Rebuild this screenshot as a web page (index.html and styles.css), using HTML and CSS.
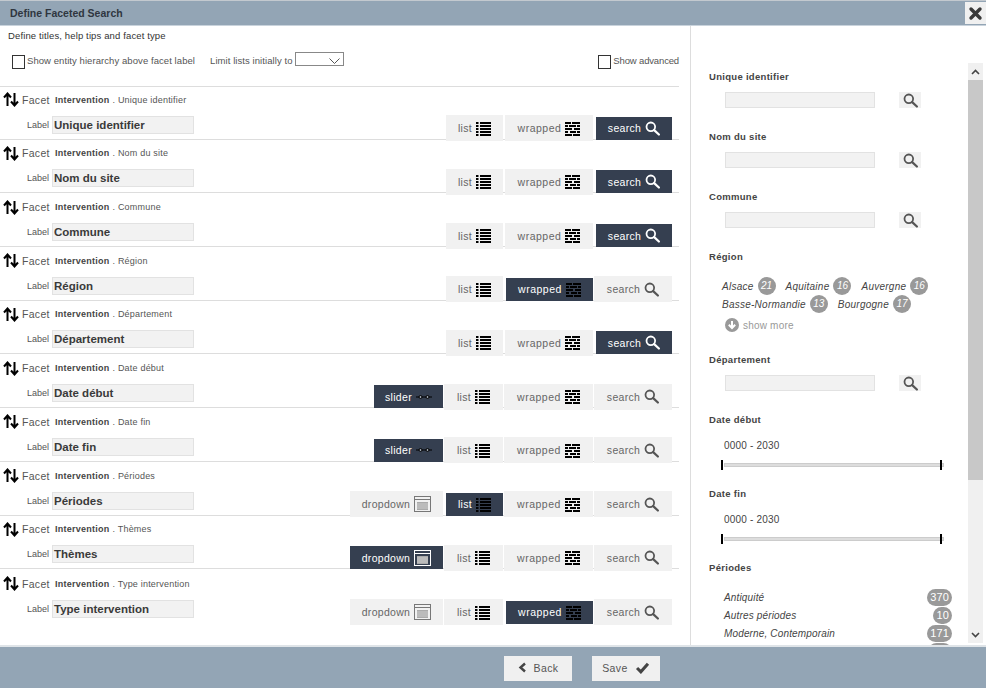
FILE: index.html
```html
<!DOCTYPE html>
<html lang="en">
<head>
<meta charset="utf-8">
<title>Define Faceted Search</title>
<link rel="stylesheet" href="styles.css">
</head>
<body>
<svg class="defs" width="0" height="0" aria-hidden="true">
  <symbol id="i-search" viewBox="0 0 16 16"><circle cx="6.2" cy="6.2" r="4.6" fill="none" stroke="currentColor" stroke-width="1.9"/><path d="M9.8 9.8 14.8 14.4" fill="none" stroke="currentColor" stroke-width="2.4" stroke-linecap="round"/></symbol>
  <symbol id="i-list" viewBox="0 0 15 15"><path d="M0 1h2.500v2H0zM0 4h2.500v2H0zM0 7h2.500v2H0zM0 10h2.500v2H0zM0 13h2.500v2H0zM4 1h11v2H4zM4 4h11v2H4zM4 7h11v2H4zM4 10h11v2H4zM4 13h11v2H4z" fill="#000"/></symbol>
  <symbol id="i-wrap" viewBox="0 0 15 15"><path d="M0 1h6v2H0zM7 1h8v2H7zM0 4h3v2H0zM4 4h7v2H4zM12 4h3v2h-3zM0 7h7v2H0zM9 7h6v2H9zM0 10h3v2H0zM5 10h6v2H5zM12 10h3v2h-3zM0 13h7v2H0zM8 13h7v2H8z" fill="#000"/></symbol>
  <symbol id="i-slider" viewBox="0 0 16 6"><path d="M0 3h16" stroke="#000" stroke-width="1"/><circle cx="4.500" cy="3" r="1.500" fill="#9aa2ad" stroke="#000"/><circle cx="11.500" cy="3" r="1.500" fill="#9aa2ad" stroke="#000"/></symbol>
  <symbol id="i-drop" viewBox="0 0 17 16"><rect x=".5" y=".5" width="16" height="15" fill="none" stroke="currentColor"/><path d="M1 3.500h15" stroke="currentColor"/><path d="M3 6h11v8H3z" fill="#aaa"/><path d="M3 8h11M3 10h11M3 12h11" stroke="#ddd" stroke-width=".7"/></symbol>
  <symbol id="i-sort" viewBox="0 0 16 15"><path d="M4.500 14V3M1 5.500 4.500 1.500 8 5.500M11.500 1v11M8 9.500 11.500 13.500 15 9.500" fill="none" stroke="#000" stroke-width="2"/></symbol>
</svg>
<div class="dialog">
  <header class="head">
    <h1 class="title">Define Faceted Search</h1>
    <button class="close" type="button" aria-label="Close"><svg width="15" height="15" viewBox="0 0 15 15"><path d="M3 3 12 12M12 3 3 12" stroke="#3a3a3a" stroke-width="3.400" stroke-linecap="round"/></svg></button>
  </header>
  <main class="main">
    <section class="left">
      <p class="intro">Define titles, help tips and facet type</p>
      <div class="opts">
        <span class="box"></span><span class="opt-text">Show entity hierarchy above facet label</span>
        <span class="opt-text limit">Limit lists initially to</span>
        <span class="select"><svg width="11" height="6" viewBox="0 0 11 6"><path d="M.5.500 5.500 5.500 10.500.5" fill="none" stroke="#555"/></svg></span>
        <span class="box adv"></span><span class="opt-text adv-t">Show advanced</span>
      </div>
      <div class="rows">
        <div class="row">
          <div class="meta">
            <div class="facet"><svg class="sort"><use href="#i-sort"/></svg><span class="fw">Facet</span><b>Intervention</b><span class="path">. Unique identifier</span></div>
            <div class="lab"><span class="lab-t">Label</span><span class="lab-i">Unique identifier</span></div>
          </div>
          <div class="btns">
            <span class="btn b-list first">list<svg class="ic"><use href="#i-list"/></svg></span>
            <span class="btn b-wrap">wrapped<svg class="ic"><use href="#i-wrap"/></svg></span>
            <span class="btn b-search on">search<svg class="ic"><use href="#i-search"/></svg></span>
          </div>
        </div>
        <div class="row">
          <div class="meta">
            <div class="facet"><svg class="sort"><use href="#i-sort"/></svg><span class="fw">Facet</span><b>Intervention</b><span class="path">. Nom du site</span></div>
            <div class="lab"><span class="lab-t">Label</span><span class="lab-i">Nom du site</span></div>
          </div>
          <div class="btns">
            <span class="btn b-list first">list<svg class="ic"><use href="#i-list"/></svg></span>
            <span class="btn b-wrap">wrapped<svg class="ic"><use href="#i-wrap"/></svg></span>
            <span class="btn b-search on">search<svg class="ic"><use href="#i-search"/></svg></span>
          </div>
        </div>
        <div class="row">
          <div class="meta">
            <div class="facet"><svg class="sort"><use href="#i-sort"/></svg><span class="fw">Facet</span><b>Intervention</b><span class="path">. Commune</span></div>
            <div class="lab"><span class="lab-t">Label</span><span class="lab-i">Commune</span></div>
          </div>
          <div class="btns">
            <span class="btn b-list first">list<svg class="ic"><use href="#i-list"/></svg></span>
            <span class="btn b-wrap">wrapped<svg class="ic"><use href="#i-wrap"/></svg></span>
            <span class="btn b-search on">search<svg class="ic"><use href="#i-search"/></svg></span>
          </div>
        </div>
        <div class="row">
          <div class="meta">
            <div class="facet"><svg class="sort"><use href="#i-sort"/></svg><span class="fw">Facet</span><b>Intervention</b><span class="path">. Région</span></div>
            <div class="lab"><span class="lab-t">Label</span><span class="lab-i">Région</span></div>
          </div>
          <div class="btns">
            <span class="btn b-list first">list<svg class="ic"><use href="#i-list"/></svg></span>
            <span class="btn b-wrap on">wrapped<svg class="ic"><use href="#i-wrap"/></svg></span>
            <span class="btn b-search">search<svg class="ic"><use href="#i-search"/></svg></span>
          </div>
        </div>
        <div class="row">
          <div class="meta">
            <div class="facet"><svg class="sort"><use href="#i-sort"/></svg><span class="fw">Facet</span><b>Intervention</b><span class="path">. Département</span></div>
            <div class="lab"><span class="lab-t">Label</span><span class="lab-i">Département</span></div>
          </div>
          <div class="btns">
            <span class="btn b-list first">list<svg class="ic"><use href="#i-list"/></svg></span>
            <span class="btn b-wrap">wrapped<svg class="ic"><use href="#i-wrap"/></svg></span>
            <span class="btn b-search on">search<svg class="ic"><use href="#i-search"/></svg></span>
          </div>
        </div>
        <div class="row">
          <div class="meta">
            <div class="facet"><svg class="sort"><use href="#i-sort"/></svg><span class="fw">Facet</span><b>Intervention</b><span class="path">. Date début</span></div>
            <div class="lab"><span class="lab-t">Label</span><span class="lab-i">Date début</span></div>
          </div>
          <div class="btns">
            <span class="btn b-slider on">slider<svg class="ic-s"><use href="#i-slider"/></svg></span>
            <span class="btn b-list">list<svg class="ic"><use href="#i-list"/></svg></span>
            <span class="btn b-wrap">wrapped<svg class="ic"><use href="#i-wrap"/></svg></span>
            <span class="btn b-search">search<svg class="ic"><use href="#i-search"/></svg></span>
          </div>
        </div>
        <div class="row">
          <div class="meta">
            <div class="facet"><svg class="sort"><use href="#i-sort"/></svg><span class="fw">Facet</span><b>Intervention</b><span class="path">. Date fin</span></div>
            <div class="lab"><span class="lab-t">Label</span><span class="lab-i">Date fin</span></div>
          </div>
          <div class="btns">
            <span class="btn b-slider on">slider<svg class="ic-s"><use href="#i-slider"/></svg></span>
            <span class="btn b-list">list<svg class="ic"><use href="#i-list"/></svg></span>
            <span class="btn b-wrap">wrapped<svg class="ic"><use href="#i-wrap"/></svg></span>
            <span class="btn b-search">search<svg class="ic"><use href="#i-search"/></svg></span>
          </div>
        </div>
        <div class="row">
          <div class="meta">
            <div class="facet"><svg class="sort"><use href="#i-sort"/></svg><span class="fw">Facet</span><b>Intervention</b><span class="path">. Périodes</span></div>
            <div class="lab"><span class="lab-t">Label</span><span class="lab-i">Périodes</span></div>
          </div>
          <div class="btns">
            <span class="btn b-drop">dropdown<svg class="ic-d"><use href="#i-drop"/></svg></span>
            <span class="btn b-list on">list<svg class="ic"><use href="#i-list"/></svg></span>
            <span class="btn b-wrap">wrapped<svg class="ic"><use href="#i-wrap"/></svg></span>
            <span class="btn b-search">search<svg class="ic"><use href="#i-search"/></svg></span>
          </div>
        </div>
        <div class="row">
          <div class="meta">
            <div class="facet"><svg class="sort"><use href="#i-sort"/></svg><span class="fw">Facet</span><b>Intervention</b><span class="path">. Thèmes</span></div>
            <div class="lab"><span class="lab-t">Label</span><span class="lab-i">Thèmes</span></div>
          </div>
          <div class="btns">
            <span class="btn b-drop on">dropdown<svg class="ic-d"><use href="#i-drop"/></svg></span>
            <span class="btn b-list">list<svg class="ic"><use href="#i-list"/></svg></span>
            <span class="btn b-wrap">wrapped<svg class="ic"><use href="#i-wrap"/></svg></span>
            <span class="btn b-search">search<svg class="ic"><use href="#i-search"/></svg></span>
          </div>
        </div>
        <div class="row last">
          <div class="meta">
            <div class="facet"><svg class="sort"><use href="#i-sort"/></svg><span class="fw">Facet</span><b>Intervention</b><span class="path">. Type intervention</span></div>
            <div class="lab"><span class="lab-t">Label</span><span class="lab-i">Type intervention</span></div>
          </div>
          <div class="btns">
            <span class="btn b-drop">dropdown<svg class="ic-d"><use href="#i-drop"/></svg></span>
            <span class="btn b-list">list<svg class="ic"><use href="#i-list"/></svg></span>
            <span class="btn b-wrap on">wrapped<svg class="ic"><use href="#i-wrap"/></svg></span>
            <span class="btn b-search">search<svg class="ic"><use href="#i-search"/></svg></span>
          </div>
        </div>
      </div>
    </section>
    <aside class="right">
      <div class="preview">
        <h2 class="ft">Unique identifier</h2>
        <div class="sr"><span class="sr-i"></span><span class="sr-b"><svg class="ic-p"><use href="#i-search"/></svg></span></div>
        <h2 class="ft">Nom du site</h2>
        <div class="sr"><span class="sr-i"></span><span class="sr-b"><svg class="ic-p"><use href="#i-search"/></svg></span></div>
        <h2 class="ft">Commune</h2>
        <div class="sr"><span class="sr-i"></span><span class="sr-b"><svg class="ic-p"><use href="#i-search"/></svg></span></div>
        <h2 class="ft">Région</h2>
        <div class="tags">
          <div class="tag-row"><i class="tag">Alsace</i><i class="cnt">21</i><i class="tag">Aquitaine</i><i class="cnt">16</i><i class="tag">Auvergne</i><i class="cnt">16</i></div>
          <div class="tag-row"><i class="tag">Basse-Normandie</i><i class="cnt">13</i><i class="tag">Bourgogne</i><i class="cnt">17</i></div>
          <div class="more"><svg width="14" height="14" viewBox="0 0 14 14"><circle cx="7" cy="7" r="7" fill="#999"/><path d="M7 3v7M3.800 6.800 7 10l3.200-3.200" fill="none" stroke="#fff" stroke-width="2"/></svg><span>show more</span></div>
        </div>
        <h2 class="ft">Département</h2>
        <div class="sr"><span class="sr-i"></span><span class="sr-b"><svg class="ic-p"><use href="#i-search"/></svg></span></div>
        <h2 class="ft">Date début</h2>
        <div class="range"><div class="rng-t">0000 - 2030</div><div class="track"><span class="hdl h1"></span><span class="hdl h2"></span></div></div>
        <h2 class="ft">Date fin</h2>
        <div class="range"><div class="rng-t">0000 - 2030</div><div class="track"><span class="hdl h1"></span><span class="hdl h2"></span></div></div>
        <h2 class="ft">Périodes</h2>
        <ul class="per">
          <li><i>Antiquité</i><b class="pill">370</b></li>
          <li><i>Autres périodes</i><b class="pill">10</b></li>
          <li><i>Moderne, Contemporain</i><b class="pill">171</b></li>
          <li><b class="pill pill-cut"></b></li>
        </ul>
      </div>
      <div class="sb">
        <span class="sb-a"><svg width="9" height="6" viewBox="0 0 9 6"><path d="M1 5 4.500 1.500 8 5" fill="none" stroke="#444" stroke-width="1.600"/></svg></span>
        <span class="sb-t"></span>
        <span class="sb-a dn"><svg width="9" height="6" viewBox="0 0 9 6"><path d="M1 1 4.500 4.500 8 1" fill="none" stroke="#444" stroke-width="1.600"/></svg></span>
      </div>
    </aside>
  </main>
  <footer class="foot">
    <button class="fbtn" type="button"><svg width="9" height="11" viewBox="0 0 9 11"><path d="M7 1.500 2.500 5.500 7 9.500" fill="none" stroke="#444" stroke-width="2.400"/></svg><span>Back</span></button>
    <button class="fbtn save" type="button"><span>Save</span><svg width="15" height="12" viewBox="0 0 13 11"><path d="M1.500 5.500 5 9 11.500 1.500" fill="none" stroke="#444" stroke-width="2.800"/></svg></button>
  </footer>
</div>
</body>
</html>
```

FILE: styles.css
```css
* { box-sizing: border-box; }
html, body { margin: 0; padding: 0; }
body { font-family: "Liberation Sans", Arial, sans-serif; color: #333; background: #fff; }
.defs { position: absolute; }
.dialog { width: 986px; height: 688px; display: flex; flex-direction: column; overflow: hidden; }

.head { height: 26px; flex: none; display: flex; justify-content: space-between; align-items: center; background: #93a5b5; border-top: 1px solid #c3c9cf; border-bottom: 1px solid #c9d3dc; }
.title { margin: 0 0 0 10px; font-size: 10.500px; font-weight: bold; color: #2f3640; }
.close { width: 21px; height: 22px; padding: 0; border: 0; background: #f0f0f0; display: flex; align-items: center; justify-content: center; }

.main { flex: 1; min-height: 0; display: flex; }
.left { width: 690px; flex: none; padding: 0 11px 0 0; }
.intro { margin: 0; padding: 4px 0 0 8px; height: 25px; font-size: 9.500px; line-height: 12px; letter-spacing: .13px; color: #333; }
.opts { height: 35px; display: flex; align-items: flex-start; padding-left: 12px; font-size: 9.500px; color: #555; letter-spacing: .07px; }
.box { width: 13px; height: 14px; margin-top: 4px; border: 1px solid #333; flex: none; }
.opt-text { margin: 3px 0 0 2px; line-height: 13px; }
.limit { margin-left: 15px; }
.select { width: 49px; height: 14px; margin: 1px 0 0 3px; border: 1px solid #888; display: flex; align-items: flex-end; justify-content: flex-end; padding: 0 3px 1px 0; }
.adv { margin-left: auto; }
.adv-t { letter-spacing: -.15px; }

.rows { border-top: 1px solid #ddd; }
.row { height: 53.700px; display: flex; justify-content: space-between; align-items: flex-end; border-bottom: 1px solid #ddd; padding-right: 7px; }
.row:first-child { height: 52.700px; }
.row.last { border-bottom: 0; }
.meta { padding-bottom: 5px; }
.facet { height: 18px; display: flex; align-items: center; margin-bottom: 7px; font-size: 9px; color: #444; }
.sort { width: 16px; height: 15px; margin-left: 3px; flex: none; }
.fw { margin-left: 3px; font-size: 10.500px; color: #555; letter-spacing: .3px; width: 33px; }
.facet b { font-weight: bold; color: #444; letter-spacing: .25px; }
.path { margin-left: 3px; color: #555; letter-spacing: .2px; }
.lab { display: flex; align-items: center; padding-left: 27px; }
.lab-t { font-size: 9px; color: #555; width: 25px; }
.lab-i { width: 142px; height: 18px; line-height: 17px; padding-left: 1px; background: #f2f2f2; border: 1px solid #e2e2e2; font-size: 11.500px; font-weight: bold; color: #3a3a3a; }

.btns { display: flex; align-items: center; margin-bottom: -2.500px; height: 26px; }
.btn { height: 26px; margin-right: 1px; display: flex; align-items: center; justify-content: center; gap: 4px; background: #f1f1f1; font-size: 10.500px; letter-spacing: .3px; color: #666; }
.btn:last-child { margin-right: 0; }
.btn.on { height: 23px; margin-top: 0; background: #353f50; color: #fff; }
.b-slider { width: 69px; }
.b-drop { width: 93px; }
.b-list { width: 59px; }
.b-wrap { width: 89px; letter-spacing: .5px; }
.b-search { width: 78px; }
.b-list.first, .b-list.on { width: 57px; margin-left: 2px; }
.first + .b-wrap { width: 88px; margin-left: 1px; }
.b-wrap.on, .first + .b-wrap.on { width: 87px; margin-left: 2px; }
.b-search.on { width: 76px; margin-left: 2px; }
.ic { width: 15px; height: 15px; flex: none; }
.ic-s { width: 16px; height: 6px; flex: none; }
.ic-d { width: 17px; height: 16px; flex: none; }
.b-search .ic { color: #555; }
.b-search.on .ic { color: #fff; }
.b-drop .ic-d { color: #777; }
.b-drop.on .ic-d { color: #fff; }

.right { flex: 1; min-width: 0; position: relative; overflow: hidden; border-left: 1px solid #ddd; }
.preview { width: 277px; padding: 43px 0 0 18px; }
.ft { margin: 0; height: 16px; line-height: 16px; font-size: 9.500px; font-weight: bold; letter-spacing: .3px; color: #444; }
.sr { height: 44px; padding: 7px 0 0 16px; display: flex; align-items: flex-start; }
.sr-i { width: 150px; height: 16px; background: #f2f2f2; border: 1px solid #e2e2e2; }
.sr-b { width: 22px; height: 16px; margin-left: 24px; background: #f1f1f1; display: flex; justify-content: center; align-items: center; }
.ic-p { width: 15px; height: 15px; color: #555; }
.tags { height: 87px; padding: 12px 0 0 13px; font-size: 10px; color: #444; }
.tag-row { height: 18px; display: flex; align-items: center; }
.tag { letter-spacing: .25px; }
.cnt { width: 18px; height: 18px; margin: 0 10px 0 4px; border-radius: 50%; background: #999; color: #fff; text-align: center; line-height: 18px; font-size: 10px; }
.more { display: flex; align-items: center; gap: 4px; margin: 5px 0 0 3px; font-size: 10px; color: #999; letter-spacing: .2px; }
.range { height: 58px; padding: 12px 0 0 15px; }
.rng-t { font-size: 10px; line-height: 12px; letter-spacing: .2px; color: #444; }
.track { position: relative; width: 220px; height: 4px; margin-top: 11px; border: 1px solid #ccc; background: #ddd; }
.hdl { position: absolute; top: -4px; width: 2px; height: 10px; background: #000; }
.h1 { left: -4px; }
.h2 { left: 215px; }
.per { margin: 0; padding: 12px 0 0 15px; list-style: none; width: 243px; font-size: 10px; color: #444; }
.per li { height: 18px; display: flex; justify-content: space-between; align-items: center; letter-spacing: .15px; }
.pill { min-width: 18px; height: 17px; padding: 0 3px; border-radius: 9px; background: #999; color: #fff; font-weight: normal; font-size: 11px; line-height: 17px; text-align: center; }
.pill-cut { width: 24px; margin-left: auto; }

.sb { position: absolute; top: 37px; bottom: 2px; left: 277px; width: 15px; background: #f0f0f0; display: flex; flex-direction: column; }
.sb-a { height: 17px; flex: none; display: flex; align-items: center; justify-content: center; }
.sb-t { height: 400px; flex: none; background: #c8c8c8; }
.dn { margin-top: auto; }

.foot { height: 43px; flex: none; display: flex; justify-content: center; gap: 20px; padding: 9px 0 0 178px; background: #93a5b5; border-top: 2px solid #dfe4e8; }
.fbtn { width: 68px; height: 25px; padding: 0 0 2px; border: 0; background: #f0f0f0; display: flex; align-items: center; justify-content: center; gap: 7px; font-family: inherit; font-size: 10.500px; letter-spacing: .4px; color: #555; }
```
